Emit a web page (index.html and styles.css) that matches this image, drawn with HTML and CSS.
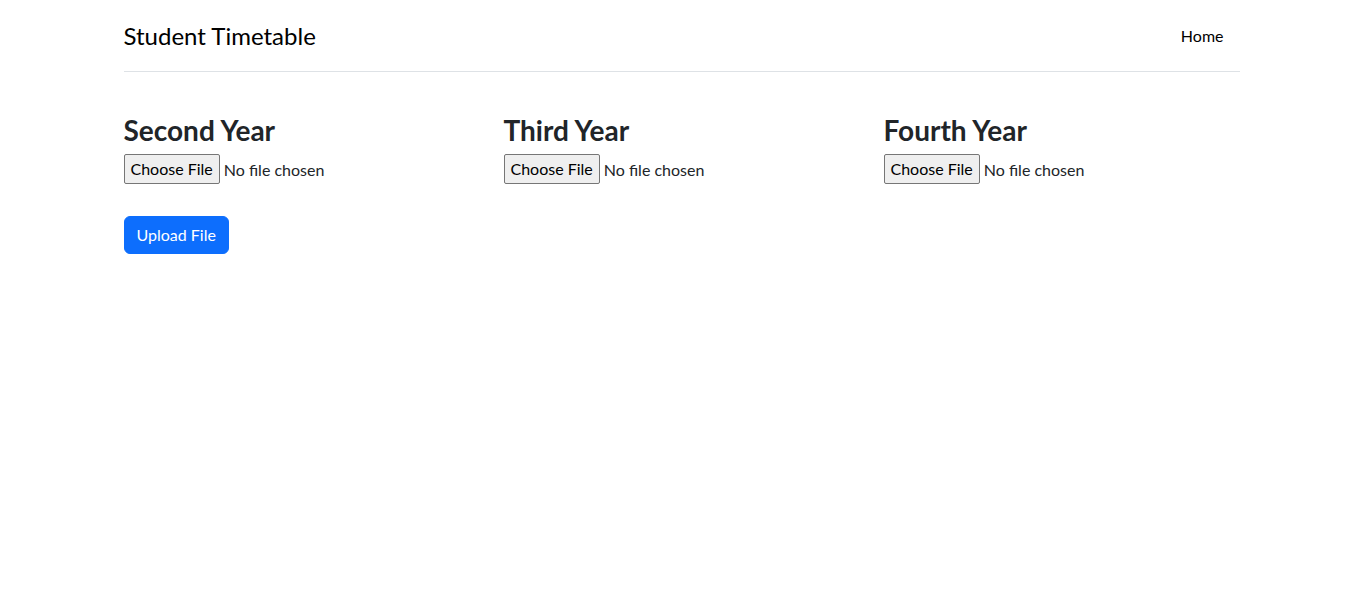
FILE: index.html
```html
<!DOCTYPE html>
<html lang="en">
<head>
<meta charset="utf-8">
<title>Student Timetable</title>
<link rel="stylesheet" href="styles.css">
</head>
<body>
<div class="container">
  <header class="header">
    <a class="brand" href="#">Student Timetable</a>
    <nav class="nav">
      <a class="nav-link" href="#">Home</a>
    </nav>
  </header>
  <form class="upload-form">
    <div class="row">
      <div class="col">
        <h3 class="year-title">Second Year</h3>
        <input type="file" class="file-input" name="second">
      </div>
      <div class="col">
        <h3 class="year-title">Third Year</h3>
        <input type="file" class="file-input" name="third">
      </div>
      <div class="col">
        <h3 class="year-title">Fourth Year</h3>
        <input type="file" class="file-input" name="fourth">
      </div>
    </div>
    <button type="button" class="btn-primary">Upload File</button>
  </form>
</div>
</body>
</html>
```

FILE: styles.css
```css
* { box-sizing: border-box; }
body {
  margin: 0;
  font-family: Lato, "Noto Sans", "Liberation Sans", sans-serif;
  font-size: 16px;
  line-height: 1.5;
  color: #212529;
  background: #fff;
}
.container {
  max-width: 1140px;
  margin: 0 auto;
  padding: 0 12px;
}
.header {
  display: flex;
  align-items: center;
  justify-content: space-between;
  padding: 16px 0 15px;
  border-bottom: 1px solid #dee2e6;
  margin-bottom: 24px;
}
.brand {
  font-size: 24px;
  line-height: 36px;
  color: #000;
  text-decoration: none;
}
.nav { display: flex; }
.nav-link {
  display: block;
  padding: 8px 16px;
  font-size: 16px;
  line-height: 24px;
  color: #000;
  text-decoration: none;
}
.upload-form { padding-top: 18px; }
.row {
  display: grid;
  grid-template-columns: repeat(3, 1fr);
  column-gap: 24px;
}
.year-title {
  margin: 0 0 6px;
  font-size: 28px;
  font-weight: 700;
  line-height: 1.2;
}
.file-input {
  font-family: inherit;
  font-size: 16px;
  color: #212529;
  height: 30px;
}
.file-input::file-selector-button {
  font-family: inherit;
  font-size: 16px;
  height: 30px;
  padding: 1px 6px;
  margin-right: 4px;
  background: #efefef;
  border: 1px solid #767676;
  border-radius: 2px;
  color: #000;
}
.btn-primary {
  display: inline-block;
  margin-top: 32px;
  padding: 6px 12px;
  font-family: inherit;
  font-size: 16px;
  line-height: 24px;
  color: #fff;
  background: #0d6efd;
  border: 1px solid #0d6efd;
  border-radius: 6px;
}
```
